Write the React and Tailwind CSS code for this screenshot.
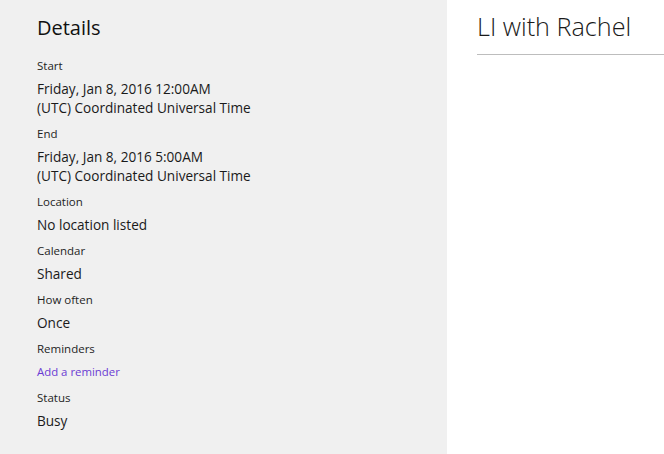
import React from "react";

const font = { fontFamily: '"Open Sans", "Noto Sans", sans-serif' };

function Field({ label, children, link }) {
  return (
    <div className="mb-[9px]">
      <div className="text-[11.5px] leading-[16px] text-[#1e1e1e]">{label}</div>
      <div className={"mt-[5px] leading-[19px] " + (link ? "text-[11.4px] text-[#6a3bd3]" : "text-[13.6px] text-[#1a1a1a]")}>{children}</div>
    </div>
  );
}

export default function App() {
  return (
    <div className="flex w-[664px] h-[454px] overflow-hidden bg-white" style={font}>
      <div className="w-[447px] shrink-0 bg-[#f0f0f0] pl-[37px] pt-[14px]">
        <div className="text-[20px] leading-[28px] text-[#111] mb-[16px]">Details</div>
        <Field label="Start">
          <div>Friday, Jan 8, 2016 12:00AM</div>
          <div>(UTC) Coordinated Universal Time</div>
        </Field>
        <Field label="End">
          <div>Friday, Jan 8, 2016 5:00AM</div>
          <div>(UTC) Coordinated Universal Time</div>
        </Field>
        <Field label="Location">No location listed</Field>
        <Field label="Calendar">Shared</Field>
        <Field label="How often">Once</Field>
        <Field label="Reminders" link>Add a reminder</Field>
        <Field label="Status">Busy</Field>
      </div>
      <div className="flex-1 pl-[30px] pt-[8px]">
        <div className="text-[25.2px] leading-[36px] font-light text-[#1a1a1a]">LI with Rachel</div>
        <div className="mt-[10px] h-px bg-[#bdbdbd]"></div>
      </div>
    </div>
  );
}
